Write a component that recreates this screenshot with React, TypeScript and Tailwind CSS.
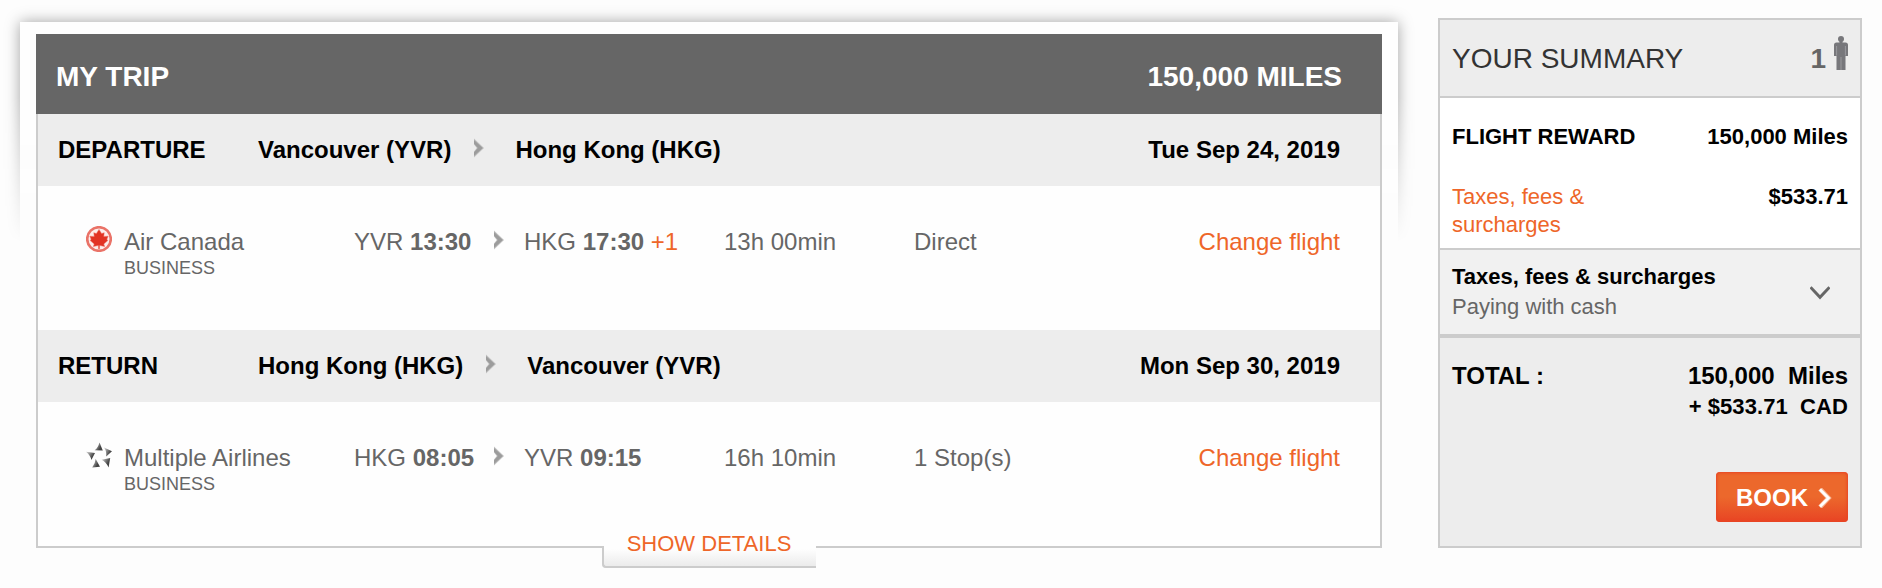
import type { ReactNode } from 'react'

type Leg = {
  label: string
  from: string
  to: string
  date: string
  icon: ReactNode
  airline: string
  cabin: string
  depart: { code: string; time: string }
  arrive: { code: string; time: string; offset?: string }
  duration: string
  stops: string
}

function MapleIcon() {
  return (
    <svg width="26" height="26" viewBox="0 0 26 26" className="shrink-0">
      <circle cx="13" cy="13" r="11.8" fill="#fdeeec" stroke="#ea7368" strokeWidth="2.6" />
      <path
        d="M13 3.400l2.600 4.200 2.600-.9-.4 3.700 4.400-.2-1.300 3 .9 1.400-4 3.400.9 2.600-5-1.200-.2 3.600h-1l-.2-3.600-5 1.200.9-2.600-4-3.400.9-1.400-1.300-3 4.400.2-.4-3.700 2.600.9z"
        fill="#e23324"
        stroke="#ec7266"
        strokeWidth="0.5"
      />
    </svg>
  )
}

function AllianceIcon() {
  return (
    <svg width="26" height="26" viewBox="0 0 26 26" className="shrink-0">
      <defs>
        <linearGradient id="blade" x1="0" y1="0" x2="1" y2="0.6">
          <stop offset="0.1" stopColor="#c8c8c8" />
          <stop offset="0.8" stopColor="#444" />
        </linearGradient>
      </defs>
      <g fill="url(#blade)">
        <path d="M13.500 0.500L16.800 8.600L8.600 8.200Q12 6 13.500 0.500z" />
        <path d="M18 5.600L26 9.200L20.200 14.600Q20.800 9.500 18 5.600z" />
        <path d="M0 9.800L9 11L5.400 18Q4.200 13 0 9.800z" />
        <path d="M9.600 16.800L14 24.800L6.200 25.400Q9.400 21.500 9.600 16.800z" />
        <path d="M15.600 17.800L24.200 16L22.600 25.400Q20 20 15.600 17.800z" />
      </g>
    </svg>
  )
}

function Arrow() {
  return (
    <svg width="10" height="20" viewBox="0 0 10 20" className="shrink-0">
      <path d="M0 0.500L10 10L0 19.500V13.500L2.800 10L0 6.500z" fill="#c0c0c0" />
      <path d="M0 2L8.800 10L0 18V14.200L3.800 10L0 5.800z" fill="#9c9c9c" />
    </svg>
  )
}

function PersonIcon() {
  return (
    <svg width="14" height="34" viewBox="0 0 14 34" className="shrink-0">
      <g fill="#77777b">
        <circle cx="7" cy="3" r="3" />
        <path d="M5.500 5h3v2h-3z" />
        <path d="M2.500 6.500h9q2.500 0 2.500 2.500V20h-2.500v14H2.500V20H0V9q0-2.500 2.500-2.500z" />
      </g>
      <path d="M2.600 10v9.500M11.400 10v9.500M7 21v13" stroke="#a2a2a6" strokeWidth="0.8" />
    </svg>
  )
}

const legs: Leg[] = [
  {
    label: 'DEPARTURE',
    from: 'Vancouver (YVR)',
    to: 'Hong Kong (HKG)',
    date: 'Tue Sep 24, 2019',
    icon: <MapleIcon />,
    airline: 'Air Canada',
    cabin: 'BUSINESS',
    depart: { code: 'YVR', time: '13:30' },
    arrive: { code: 'HKG', time: '17:30', offset: '+1' },
    duration: '13h 00min',
    stops: 'Direct',
  },
  {
    label: 'RETURN',
    from: 'Hong Kong (HKG)',
    to: 'Vancouver (YVR)',
    date: 'Mon Sep 30, 2019',
    icon: <AllianceIcon />,
    airline: 'Multiple Airlines',
    cabin: 'BUSINESS',
    depart: { code: 'HKG', time: '08:05' },
    arrive: { code: 'YVR', time: '09:15' },
    duration: '16h 10min',
    stops: '1 Stop(s)',
  },
]

function TripLeg({ leg }: { leg: Leg }) {
  return (
    <section>
      <div className="flex h-[72px] bg-[#ededed] pl-5 pr-10 pt-[22px] font-bold text-black">
        <h3 className="w-[200px] shrink-0">{leg.label}</h3>
        <div className="flex">
          <span>{leg.from}</span>
          <span className="ml-[23px] mr-[31px] pt-0.5">
            <Arrow />
          </span>
          <span>{leg.to}</span>
        </div>
        <span className="ml-auto">{leg.date}</span>
      </div>

      <div className="flex h-36 pl-12 pr-10 pt-[42px] text-[#666]">
        <div className="-mt-0.5 mr-3">{leg.icon}</div>
        <div className="w-[230px] shrink-0">
          <p>{leg.airline}</p>
          <p className="mt-[3px] text-lg leading-5">{leg.cabin}</p>
        </div>
        <p className="w-[140px] shrink-0">
          {leg.depart.code} <b>{leg.depart.time}</b>
        </p>
        <span className="w-[30px] shrink-0 pt-0.5">
          <Arrow />
        </span>
        <p className="w-[200px] shrink-0">
          {leg.arrive.code} <b>{leg.arrive.time}</b>
          {leg.arrive.offset && <span className="text-[#ee6629]"> {leg.arrive.offset}</span>}
        </p>
        <p className="w-[190px] shrink-0">{leg.duration}</p>
        <p>{leg.stops}</p>
        <a href="#" className="ml-auto text-[#ee6629]">Change flight</a>
      </div>
    </section>
  )
}

function TripCard() {
  return (
    <main className="relative mt-[34px] h-[514px] w-[1346px] shrink-0">
      {/* Lifted edge, fading out down the sides */}
      <div className="absolute -left-9 -top-[34px] h-[242px] w-[1420px] overflow-hidden pl-5 pt-[22px] [mask-image:linear-gradient(to_bottom,black_40%,transparent)]">
        <div className="h-[300px] w-[1378px] bg-[#fefefe] shadow-[0_0_14px_rgba(0,0,0,0.36)]" />
      </div>

      <div className="relative h-full">
        <header className="flex h-20 justify-between bg-[#666] pl-5 pr-10 pt-[27px] text-[28px] font-bold leading-[31px] text-white">
          <h2>MY TRIP</h2>
          <span>150,000 MILES</span>
        </header>
        <div className="h-[434px] border-2 border-t-0 border-[#ccc] bg-[#fefefe] text-2xl leading-[27px]">
          {legs.map((leg) => (
            <TripLeg key={leg.label} leg={leg} />
          ))}
        </div>
        <button className="absolute left-[566px] top-[484px] h-[50px] w-[214px] rounded-bl bg-[linear-gradient(#fefefe_62%,#e9e9e9)] text-[22px] leading-[25px] text-[#ee6629]">
          <span className="absolute bottom-0 left-0 h-[22px] w-full rounded-bl border-b-2 border-l-2 border-[#ccc]" />
          SHOW DETAILS
        </button>
      </div>
    </main>
  )
}

function Summary() {
  return (
    <aside className="ml-14 mt-[18px] h-[530px] w-[424px] shrink-0 border-2 border-[#ccc] text-[22px] leading-[25px] text-black">
      <header className="flex h-[78px] border-b-2 border-[#ccc] bg-[#ededed] px-3 pt-[23px] text-[28px] leading-[31px] text-[#333]">
        <h2>YOUR SUMMARY</h2>
        <b className="ml-auto mr-2 text-[#666]">1</b>
        <span className="-mt-[7px]">
          <PersonIcon />
        </span>
      </header>

      <div className="h-[152px] border-b-2 border-[#ccc] bg-white px-3 pt-[26px]">
        <div className="flex justify-between font-bold">
          <span>FLIGHT REWARD</span>
          <span>150,000 Miles</span>
        </div>
        <div className="mt-[34px] flex justify-between leading-7">
          <a href="#" className="w-40 text-[#ee6629]">Taxes, fees &amp; surcharges</a>
          <b>$533.71</b>
        </div>
      </div>

      <div className="flex h-[88px] items-start justify-between border-b-4 border-[#ccc] bg-[#f1f1f1] pl-3 pr-[30px] pt-[14px]">
        <div>
          <p className="font-bold">Taxes, fees &amp; surcharges</p>
          <p className="mt-[5px] text-[#666]">Paying with cash</p>
        </div>
        <svg width="20" height="14" viewBox="0 0 20 14" className="mt-[22px]">
          <path d="M0.500 1.200L10 11.200L19.500 1.200" fill="none" stroke="#666" strokeWidth="3" />
        </svg>
      </div>

      <div className="flex h-[208px] flex-col bg-[#ededed] px-3 pt-6">
        <div className="flex justify-between font-bold">
          <span className="text-2xl leading-[27px]">TOTAL :</span>
          <div className="whitespace-pre text-right">
            <p className="text-2xl leading-[27px]">{'150,000  Miles'}</p>
            <p className="mt-[5px] tracking-[0.07px]">{'+ $533.71  CAD'}</p>
          </div>
        </div>
        <button className="ml-auto mt-[53px] flex h-[50px] w-[132px] rounded bg-[linear-gradient(#ec682c_50%,#e84424)] pl-5 pt-3 text-2xl font-bold leading-[27px] text-white shadow-[inset_0_0_3px_1px_#e84424]">
          BOOK
          <svg width="14" height="20" viewBox="0 0 14 20" className="ml-2.5 mt-1">
            <path d="M2 1L10.500 10L2 19" fill="none" stroke="#f7b795" strokeWidth="4.600" />
            <path d="M2 1.500L10.500 10L2 18.500" fill="none" stroke="#fff" strokeWidth="2.600" />
          </svg>
        </button>
      </div>
    </aside>
  )
}

export default function App() {
  return (
    <div className="flex h-[588px] w-[1882px] items-start overflow-hidden bg-[#fdfdfd] pl-9 font-['Liberation_Sans',Arial,sans-serif]">
      <TripCard />
      <Summary />
    </div>
  )
}
